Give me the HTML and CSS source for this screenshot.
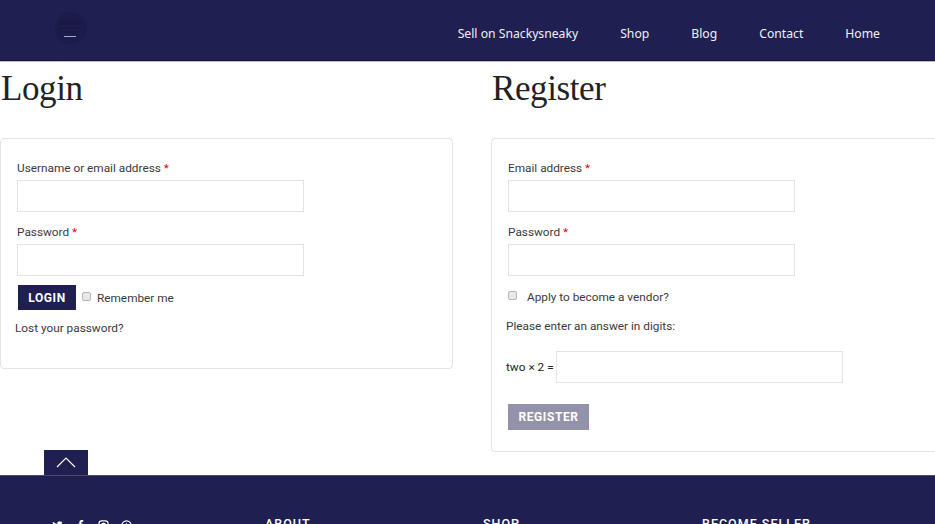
FILE: index.html
```html
<!DOCTYPE html>
<html>
<head>
    <title>My Account</title>
    <link rel="stylesheet" href="styles.css">
</head>
<body>
    <header class="site-header">
        <a class="logo" href="#">
            <svg width="32" height="32" viewBox="0 0 32 32">
                <circle cx="16" cy="16" r="16" fill="#1c1c4c"/>
                <path d="M3 10c3-3 8-3 11-1 3-2 9-2 12 1v7l-4 4H7l-4-4z" fill="#191943"/>
                <path d="M3 14h23M6 18h18" stroke="#242458" stroke-width="1"/>
                <path d="M9 24.500h12" stroke="#a9a9c9" stroke-width="1"/>
            </svg>
        </a>
        <nav class="main-nav">
            <a href="#">Sell on Snackysneaky</a>
            <a href="#">Shop</a>
            <a href="#">Blog</a>
            <a href="#">Contact</a>
            <a href="#">Home</a>
        </nav>
    </header>

    <main class="account">
        <section class="col col-login">
            <h2>Login</h2>
            <form class="card">
                <div class="form-group">
                    <label for="username">Username or email address <span class="req">*</span></label>
                    <input type="text" id="username">
                </div>
                <div class="form-group">
                    <label for="password">Password <span class="req">*</span></label>
                    <input type="password" id="password">
                </div>
                <div class="login-row">
                    <button type="button" class="btn">Login</button>
                    <input type="checkbox" id="remember" class="check">
                    <label for="remember">Remember me</label>
                </div>
                <a class="lost" href="#">Lost your password?</a>
            </form>
        </section>

        <section class="col col-register">
            <h2>Register</h2>
            <form class="card">
                <div class="form-group">
                    <label for="email">Email address <span class="req">*</span></label>
                    <input type="text" id="email">
                </div>
                <div class="form-group">
                    <label for="reg-password">Password <span class="req">*</span></label>
                    <input type="password" id="reg-password">
                </div>
                <div class="vendor-row">
                    <input type="checkbox" id="vendor" class="check">
                    <label for="vendor">Apply to become a vendor?</label>
                </div>
                <p class="captcha-note">Please enter an answer in digits:</p>
                <div class="captcha">
                    <span>two × 2 =</span>
                    <input type="text" id="answer">
                </div>
                <button type="button" class="btn btn-disabled">Register</button>
            </form>
        </section>

        <a class="to-top" href="#">
            <svg width="20" height="12" viewBox="0 0 20 12"><path d="M1 11l9-9 9 9" fill="none" stroke="#fff" stroke-width="1.2"/></svg>
        </a>
    </main>

    <footer class="site-footer">
        <div class="social">
            <svg width="11" height="11" viewBox="0 0 24 24"><path fill="#fff" d="M23 5c-.8.4-1.700.6-2.600.7 1-.6 1.700-1.500 2-2.500-.9.5-1.900.9-2.900 1.100A4.600 4.600 0 0 0 11.700 8.500 13 13 0 0 1 2.300 3.700a4.600 4.600 0 0 0 1.400 6.100c-.7 0-1.400-.2-2-.6 0 2.200 1.600 4.100 3.700 4.600-.7.200-1.400.2-2.100.1.600 1.800 2.300 3.100 4.300 3.200A9.300 9.300 0 0 1 1 19a13 13 0 0 0 20-11.600c.9-.6 1.600-1.400 2-2.400z"/></svg>
            <svg width="11" height="11" viewBox="0 0 24 24"><path fill="#fff" d="M14 8V5.500c0-1 .5-1.500 1.700-1.500H18V0h-3.500C10.800 0 9.500 2.200 9.500 5v3H6v4h3.500v12H14V12h3.500l.5-4z"/></svg>
            <svg width="11" height="11" viewBox="0 0 24 24"><rect x="2" y="2" width="20" height="20" rx="6" fill="none" stroke="#fff" stroke-width="2.500"/><circle cx="12" cy="12" r="4.500" fill="none" stroke="#fff" stroke-width="2.500"/></svg>
            <svg width="11" height="11" viewBox="0 0 24 24"><circle cx="12" cy="12" r="10" fill="none" stroke="#fff" stroke-width="2.500"/><path d="M12 7v12" stroke="#fff" stroke-width="2.500"/></svg>
        </div>
        <h4 class="foot-about">About</h4>
        <h4 class="foot-shop">Shop</h4>
        <h4 class="foot-seller">Become Seller</h4>
    </footer>
</body>
</html>
```

FILE: styles.css
```css
html, body {
    margin: 0;
    height: 524px;
    overflow: hidden;
}
body {
    background: #fff;
    color: #3a3a3a;
    font-family: Roboto, "Liberation Sans", sans-serif;
    font-size: 11.8px;
}
a {
    color: inherit;
    text-decoration: none;
}

.site-header {
    height: 60px;
    background: #1f1f52;
    border-bottom: 1px solid #14143a;
    display: flex;
    align-items: center;
    justify-content: space-between;
    padding: 0 55px;
}
.logo {
    display: flex;
    margin-bottom: 4px;
}
.main-nav {
    display: flex;
    gap: 42px;
    padding-top: 6px;
}
.main-nav a {
    color: #f1f1f6;
    font-family: "Noto Sans", "Open Sans", sans-serif;
    font-size: 12.2px;
}

.account {
    position: relative;
    height: 414px;
    display: grid;
    grid-template-columns: 453px 454px;
    column-gap: 38px;
    box-shadow: inset 0 1px 0 #b9b9d8;
}
.col h2 {
    margin: 0;
    height: 77px;
    padding: 6px 0 0 1px;
    box-sizing: border-box;
    color: #222;
    font-family: "Liberation Serif", serif;
    font-size: 35px;
    font-weight: 400;
    letter-spacing: -0.4px;
    line-height: 44px;
}
.card {
    border: 1px solid #e3e3e3;
    border-radius: 4px;
    box-sizing: border-box;
    padding: 21px 16px 0;
}
.col-login .card {
    height: 231px;
}
.col-register .card {
    height: 314px;
}
.form-group {
    margin-bottom: 12px;
}
.form-group label {
    display: block;
    line-height: 15px;
    padding-top: 1px;
    margin-bottom: 4px;
}
.req {
    color: #e00;
}
.form-group input,
.captcha input {
    display: block;
    width: 287px;
    height: 32px;
    box-sizing: border-box;
    border: 1px solid #e3e3e3;
    background: #fff;
}
.check {
    appearance: none;
    width: 9px;
    height: 9px;
    margin: 0 0 2px;
    background: #e8e8e8;
    border: 1px solid #b5b5b5;
    border-radius: 2px;
    box-sizing: border-box;
}

.btn {
    display: block;
    border: 0;
    padding: 0;
    background: #1f1f52;
    color: #fff;
    font-family: Roboto, sans-serif;
    font-size: 12px;
    font-weight: 700;
    letter-spacing: 0.6px;
    text-transform: uppercase;
}
.login-row {
    display: flex;
    align-items: center;
    margin: -3px 0 0 1px;
    height: 25px;
}
.login-row .btn {
    width: 58px;
    height: 25px;
    margin-right: 6px;
}
.login-row label {
    margin-left: 6px;
}
.lost {
    display: block;
    margin: 11px 0 0 -2px;
    line-height: 15px;
}

.vendor-row {
    display: flex;
    align-items: center;
    height: 17px;
}
.vendor-row label {
    margin-left: 10px;
}
.captcha-note {
    margin: 14px 0 0 -2px;
    line-height: 15px;
}
.captcha {
    display: flex;
    align-items: center;
    gap: 2px;
    margin: 17px 0 0 -2px;
    color: #222;
}
.btn-disabled {
    width: 81px;
    height: 26px;
    margin-top: 21px;
    background: #9392ab;
}

.to-top {
    position: absolute;
    left: 44px;
    bottom: 0;
    width: 44px;
    height: 25px;
    background: #1f1f52;
    display: flex;
    justify-content: center;
    padding-top: 6px;
    box-sizing: border-box;
}

.site-footer {
    height: 49px;
    background: #1f1f52;
    border-top: 1px solid #4a4a6a;
    box-sizing: border-box;
    display: grid;
    grid-template-columns: 213px 218px 219px 1fr;
    padding: 41px 0 0 52px;
    color: #fff;
}
.social {
    display: flex;
    gap: 12px;
    padding-top: 3px;
}
.site-footer h4 {
    margin: 0;
    font-size: 12.5px;
    font-weight: 500;
    letter-spacing: 1px;
    line-height: 14px;
    text-transform: uppercase;
}
```
